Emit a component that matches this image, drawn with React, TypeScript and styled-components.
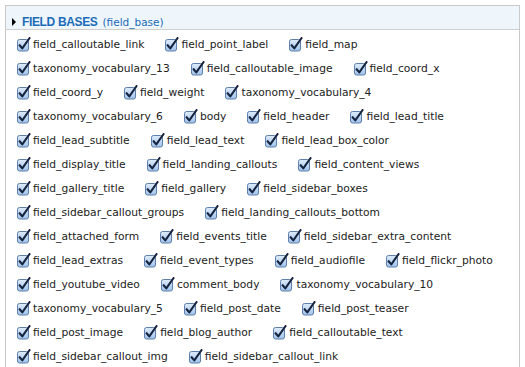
import React from 'react'
import styled, { createGlobalStyle } from 'styled-components'

const GlobalStyle = createGlobalStyle`
  html, body {
    margin: 0;
    padding: 0;
    background: #fff;
    overflow: hidden;
  }
  body {
    font-family: 'DejaVu Sans', Verdana, sans-serif;
  }
`

const rows: string[][] = [
  ['field_calloutable_link', 'field_point_label', 'field_map'],
  ['taxonomy_vocabulary_13', 'field_calloutable_image', 'field_coord_x'],
  ['field_coord_y', 'field_weight', 'taxonomy_vocabulary_4'],
  ['taxonomy_vocabulary_6', 'body', 'field_header', 'field_lead_title'],
  ['field_lead_subtitle', 'field_lead_text', 'field_lead_box_color'],
  ['field_display_title', 'field_landing_callouts', 'field_content_views'],
  ['field_gallery_title', 'field_gallery', 'field_sidebar_boxes'],
  ['field_sidebar_callout_groups', 'field_landing_callouts_bottom'],
  ['field_attached_form', 'field_events_title', 'field_sidebar_extra_content'],
  ['field_lead_extras', 'field_event_types', 'field_audiofile', 'field_flickr_photo'],
  ['field_youtube_video', 'comment_body', 'taxonomy_vocabulary_10'],
  ['taxonomy_vocabulary_5', 'field_post_date', 'field_post_teaser'],
  ['field_post_image', 'field_blog_author', 'field_calloutable_text'],
  ['field_sidebar_callout_img', 'field_sidebar_callout_link'],
]

const Page = styled.div`
  padding: 5px 0 0 5px;
`

const Fieldset = styled.section`
  width: 513px;
  border: 1px solid #c9c9c9;
  border-bottom: none;
  min-height: 400px;
`

const Legend = styled.div`
  height: 24px;
  box-sizing: border-box;
  padding: 8px 0 0 6px;
  background: #eef6fb;
  border-bottom: 1px solid #cfcfcf;
  display: flex;
  align-items: center;
  color: #1c6cb8;
`

const Arrow = styled.span`
  width: 0;
  height: 0;
  border-top: 4px solid transparent;
  border-bottom: 4px solid transparent;
  border-left: 4px solid #000;
  margin-right: 6px;
  margin-top: 1px;
`

const Title = styled.span`
  font-family: 'Liberation Sans', Arial, sans-serif;
  font-weight: bold;
  font-size: 12px;
  letter-spacing: -0.35px;
`

const Machine = styled.span`
  font-size: 10.5px;
  margin-left: 5px;
  margin-top: 1px;
`

const Options = styled.div`
  padding: 2px 0 0 11px;
`

const Row = styled.div`
  display: flex;
  align-items: center;
  height: 24px;
  gap: 21px;
`

const Option = styled.label`
  display: flex;
  align-items: center;
  gap: 2px;
  font-size: 10.7px;
  color: #222;
  white-space: nowrap;
`

const Check = () => (
  <svg width="14" height="15" viewBox="0 0 14 15">
    <defs>
      <linearGradient id="cb" x1="0" y1="0" x2="0" y2="1">
        <stop offset="0" stopColor="#dfecfb" />
        <stop offset="1" stopColor="#9fc2ec" />
      </linearGradient>
    </defs>
    <rect x="0.5" y="2.5" width="11" height="11.5" rx="2" fill="url(#cb)" stroke="#5d7ea6" />
    <path
      d="M2.6 8.2 L5.3 11.4 L12.6 1"
      fill="none"
      stroke="#16243f"
      strokeWidth="2.1"
      strokeLinecap="round"
      strokeLinejoin="round"
    />
  </svg>
)

export default function App() {
  return (
    <Page>
      <GlobalStyle />
      <Fieldset>
        <Legend>
          <Arrow />
          <Title>FIELD BASES</Title>
          <Machine>(field_base)</Machine>
        </Legend>
        <Options>
          {rows.map((row, i) => (
            <Row key={i}>
              {row.map((name) => (
                <Option key={name}>
                  <Check />
                  {name}
                </Option>
              ))}
            </Row>
          ))}
        </Options>
      </Fieldset>
    </Page>
  )
}
